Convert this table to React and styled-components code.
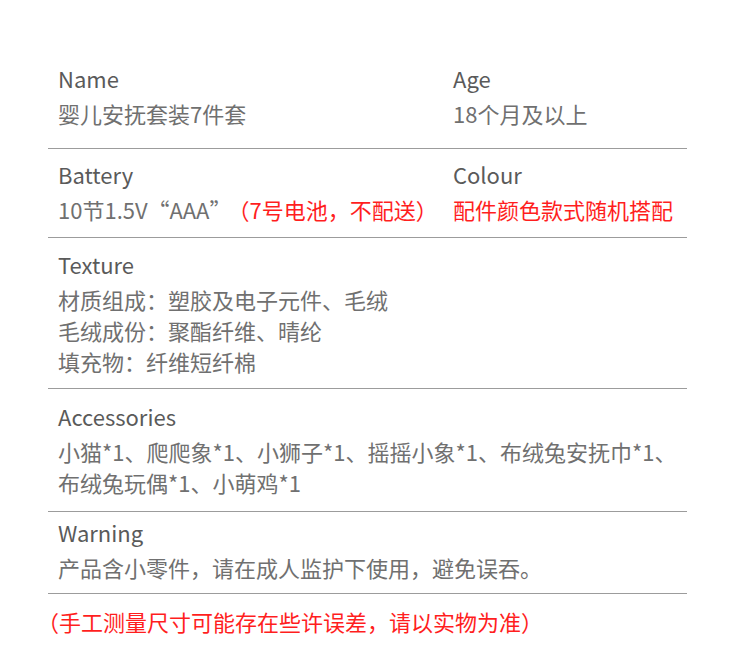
import React from 'react';
import styled, { createGlobalStyle } from 'styled-components';

const GlobalStyle = createGlobalStyle`
    body {
        margin: 0;
        background: #fff;
        font-family: "Noto Sans CJK SC", "Noto Sans", sans-serif;
    }
`;

const Page = styled.div`
    width: 750px;
    height: 661px;
    padding: 50px 63px 0 48px;
    box-sizing: border-box;
`;

const Row = styled.div`
    display: grid;
    grid-template-columns: ${({ split }) => (split ? '395px 1fr' : '1fr')};
    padding: ${({ top = 12 }) => top}px 0 ${({ bottom = 12 }) => bottom}px 10px;
    border-bottom: 1.5px solid #9c9c9c;
`;

const Cell = styled.div`
    display: flex;
    flex-direction: column;
    gap: 5px;
`;

const Label = styled.div`
    font-size: 22px;
    line-height: 30px;
    color: #5a5a5a;
`;

const Value = styled.div`
    font-size: 22px;
    line-height: 31px;
    color: #707070;
    white-space: pre-line;
`;

const Red = styled.span`
    color: #ff1e1e;
    margin-left: ${({ gap = 0 }) => gap}px;
`;

const Note = styled.div`
    margin: 12px 0 0 -11px;
    font-size: 22px;
    line-height: 31px;
    color: #ff1e1e;
`;

const App = () => {
    return (
        <>
            <GlobalStyle />
            <Page>
                <Row split top={13} bottom={19}>
                    <Cell>
                        <Label>Name</Label>
                        <Value>婴儿安抚套装7件套</Value>
                    </Cell>
                    <Cell>
                        <Label>Age</Label>
                        <Value>18个月及以上</Value>
                    </Cell>
                </Row>
                <Row split top={10} bottom={12}>
                    <Cell>
                        <Label>Battery</Label>
                        <Value>
                            10节1.5V“AAA”<Red gap={7}>（7号电池，不配送）</Red>
                        </Value>
                    </Cell>
                    <Cell>
                        <Label>Colour</Label>
                        <Value><Red>配件颜色款式随机搭配</Red></Value>
                    </Cell>
                </Row>
                <Row top={11} bottom={11}>
                    <Cell>
                        <Label>Texture</Label>
                        <Value>
                            {'材质组成：塑胶及电子元件、毛绒\n毛绒成份：聚酯纤维、晴纶\n填充物：纤维短纤棉'}
                        </Value>
                    </Cell>
                </Row>
                <Row top={12} bottom={13}>
                    <Cell>
                        <Label>Accessories</Label>
                        <Value>
                            {'小猫*1、爬爬象*1、小狮子*1、摇摇小象*1、布绒兔安抚巾*1、\n布绒兔玩偶*1、小萌鸡*1'}
                        </Value>
                    </Cell>
                </Row>
                <Row top={5} bottom={10}>
                    <Cell>
                        <Label>Warning</Label>
                        <Value>产品含小零件，请在成人监护下使用，避免误吞。</Value>
                    </Cell>
                </Row>
                <Note>（手工测量尺寸可能存在些许误差，请以实物为准）</Note>
            </Page>
        </>
    );
};

export default App;
